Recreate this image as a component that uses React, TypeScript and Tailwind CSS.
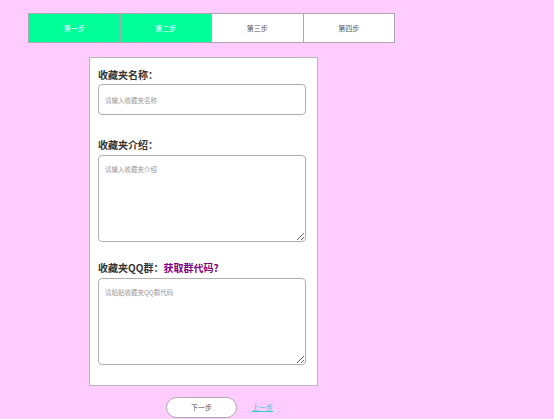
const steps = ["第一步", "第二步", "第三步", "第四步"];

export default function App() {
  const font = { fontFamily: '"Noto Sans CJK SC", "Noto Sans", sans-serif' };
  return (
    <div className="min-h-[419px] w-[554px] bg-[#ffccff] overflow-hidden" style={font}>
      <div className="pt-[13px] pl-[28px]">
        <div className="flex w-[367px] h-[30px] border border-[#aaaaaa]">
          {steps.map((s, i) => (
            <div
              key={s}
              className={`flex-1 flex items-center justify-center text-[7px] ${i > 0 ? "border-l border-[#aaaaaa]" : ""} ${
                i < 2 ? "bg-[#00ff99] text-white" : "bg-white text-[#555555]"
              }`}
            >
              {s}
            </div>
          ))}
        </div>
      </div>

      <div className="ml-[89px] mt-[14px] w-[229px] bg-white border border-[#b8b8b8] pl-[8px] pt-[9px] pb-[20px]">
        <div className="h-[16px] leading-[16px] text-[10px] font-bold text-[#333333]">收藏夹名称：</div>
        <input
          className="block mt-[1px] w-[208px] h-[31px] rounded-[4px] border border-[#b0b0b0] px-[6px] text-[6.5px] outline-none placeholder:text-[#999999]"
          placeholder="请输入收藏夹名称"
        />

        <div className="mt-[22px] h-[16px] leading-[16px] text-[10px] font-bold text-[#333333]">收藏夹介绍：</div>
        <textarea
          className="block mt-[2px] w-[208px] h-[87px] rounded-[4px] border border-[#b0b0b0] px-[6px] pt-[9px] text-[6.5px] outline-none placeholder:text-[#999999]"
          placeholder="请输入收藏夹介绍"
        />

        <div className="mt-[18px] h-[16px] leading-[16px] text-[10px] font-bold text-[#333333]">
          收藏夹QQ群：<a href="#" className="text-[#800080]">获取群代码?</a>
        </div>
        <textarea
          className="block mt-[2px] w-[208px] h-[87px] rounded-[4px] border border-[#b0b0b0] px-[6px] pt-[9px] text-[6.5px] outline-none placeholder:text-[#999999]"
          placeholder="请粘贴收藏夹QQ群代码"
        />
      </div>

      <div className="flex items-center mt-[11px] pl-[166px]">
        <button className="w-[71px] h-[21px] rounded-full border border-[#aaaaaa] bg-white text-[7px] text-[#555555]">
          下一步
        </button>
        <a href="#" className="ml-[15px] text-[7px] text-[#33cccc] underline">上一步</a>
      </div>
    </div>
  );
}
